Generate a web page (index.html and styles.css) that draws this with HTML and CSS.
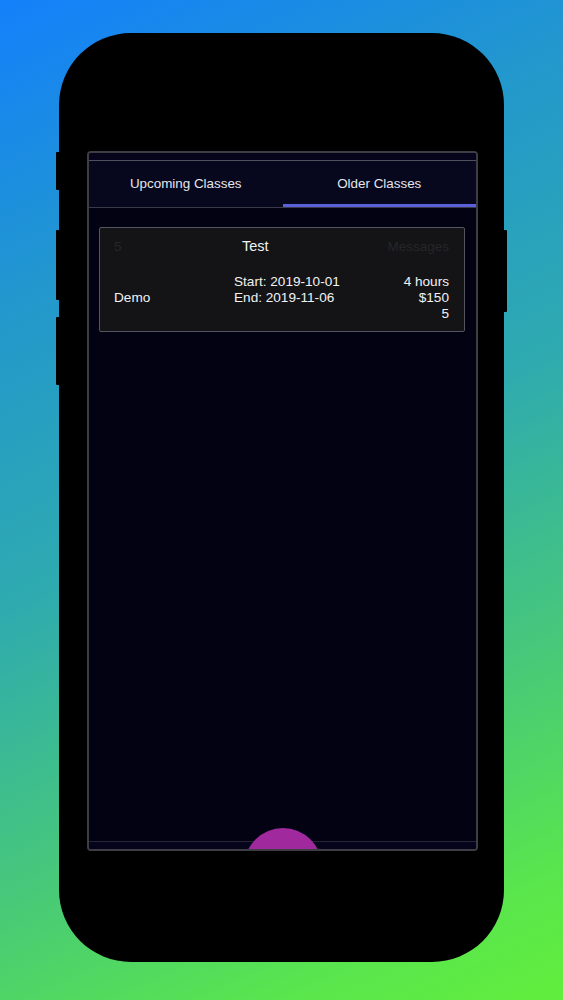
FILE: index.html
```html
<!DOCTYPE html>
<html>
<head>
<meta charset="utf-8">
<link rel="stylesheet" href="styles.css">
</head>
<body>
<div class="phone">
  <span class="btn btn-l1"></span>
  <span class="btn btn-l2"></span>
  <span class="btn btn-l3"></span>
  <span class="btn btn-r1"></span>
  <div class="screen">
    <div class="status"></div>
    <div class="tabs">
      <div class="tab">Upcoming Classes</div>
      <div class="tab active">Older Classes</div>
    </div>
    <div class="content">
      <div class="card">
        <div class="row-head">
          <span class="dim">5</span>
          <span class="title">Test</span>
          <span class="dim right">Messages</span>
        </div>
        <div class="row-body">
          <div class="col-name">Demo</div>
          <div class="col-dates">
            <div>Start: 2019-10-01</div>
            <div>End: 2019-11-06</div>
          </div>
          <div class="col-meta">
            <div>4 hours</div>
            <div>$150</div>
            <div>5</div>
          </div>
        </div>
      </div>
    </div>
    <div class="bottom"></div>
    <div class="fab"></div>
  </div>
</div>
</body>
</html>
```
FILE: styles.css
```css
* { box-sizing: border-box; }
html, body { margin: 0; padding: 0; }
body {
  width: 563px;
  height: 1000px;
  overflow: hidden;
  background: linear-gradient(155deg, #1480fb 0%, #2298cc 25%, #2eaab0 48%, #48c978 72%, #5ae64c 90%, #62ee3c 100%);
  font-family: "Liberation Sans", Arial, sans-serif;
  padding-top: 33px;
  padding-left: 59px;
}
.phone {
  position: relative;
  width: 445px;
  height: 929px;
  background: #000;
  border-radius: 72px;
  padding-top: 118px;
  padding-left: 28px;
}
.btn {
  position: absolute;
  width: 4px;
  background: #000;
  border-radius: 1px;
}
.btn-l1 { left: -3px; top: 119px; height: 38px; }
.btn-l2 { left: -3px; top: 197px; height: 70px; }
.btn-l3 { left: -3px; top: 284px; height: 68px; }
.btn-r1 { right: -3px; top: 197px; height: 82px; }
.screen {
  position: relative;
  width: 391px;
  height: 700px;
  border: 2px solid #3d3d43;
  border-radius: 4px;
  background: #020213;
  overflow: hidden;
  display: flex;
  flex-direction: column;
}
.status {
  height: 8px;
  background: #05041a;
  border-bottom: 1px solid #50505c;
}
.tabs {
  height: 47px;
  display: flex;
  background: #07071d;
  border-bottom: 1px solid #3a3a48;
}
.tab {
  flex: 1;
  display: flex;
  align-items: center;
  justify-content: center;
  color: #e6e6ec;
  font-size: 13.4px;
  padding-bottom: 1px;
  border-bottom: 3px solid transparent;
  padding-top: 3px;
}
.tab.active {
  border-bottom-color: #5b5fd8;
}
.content {
  flex: 1;
  padding: 19px 11px 0 10px;
  border-bottom: 1px solid #262634;
}
.card {
  background: #141416;
  border: 1px solid #55555f;
  border-radius: 2px;
  padding: 8px 15px 9px 14px;
  color: #f2f2f4;
}
.row-head {
  display: grid;
  grid-template-columns: 120px 1fr auto;
  align-items: center;
  height: 20px;
  font-size: 14.5px;
  margin-bottom: 18px;
}
.row-head .title { padding-left: 8px; }
.dim { color: #262628; font-size: 13.5px; }
.right { text-align: right; }
.row-body {
  display: grid;
  grid-template-columns: 120px 1fr auto;
  align-items: center;
  font-size: 13.6px;
  line-height: 16px;
}
.col-dates { align-self: start; }
.col-meta { text-align: right; }
.bottom {
  height: 7px;
  background: #05041a;
}
.fab {
  position: absolute;
  left: 50%;
  bottom: -57px;
  width: 78px;
  height: 78px;
  margin-left: -39px;
  border-radius: 50%;
  background: #a0299e;
}
```
